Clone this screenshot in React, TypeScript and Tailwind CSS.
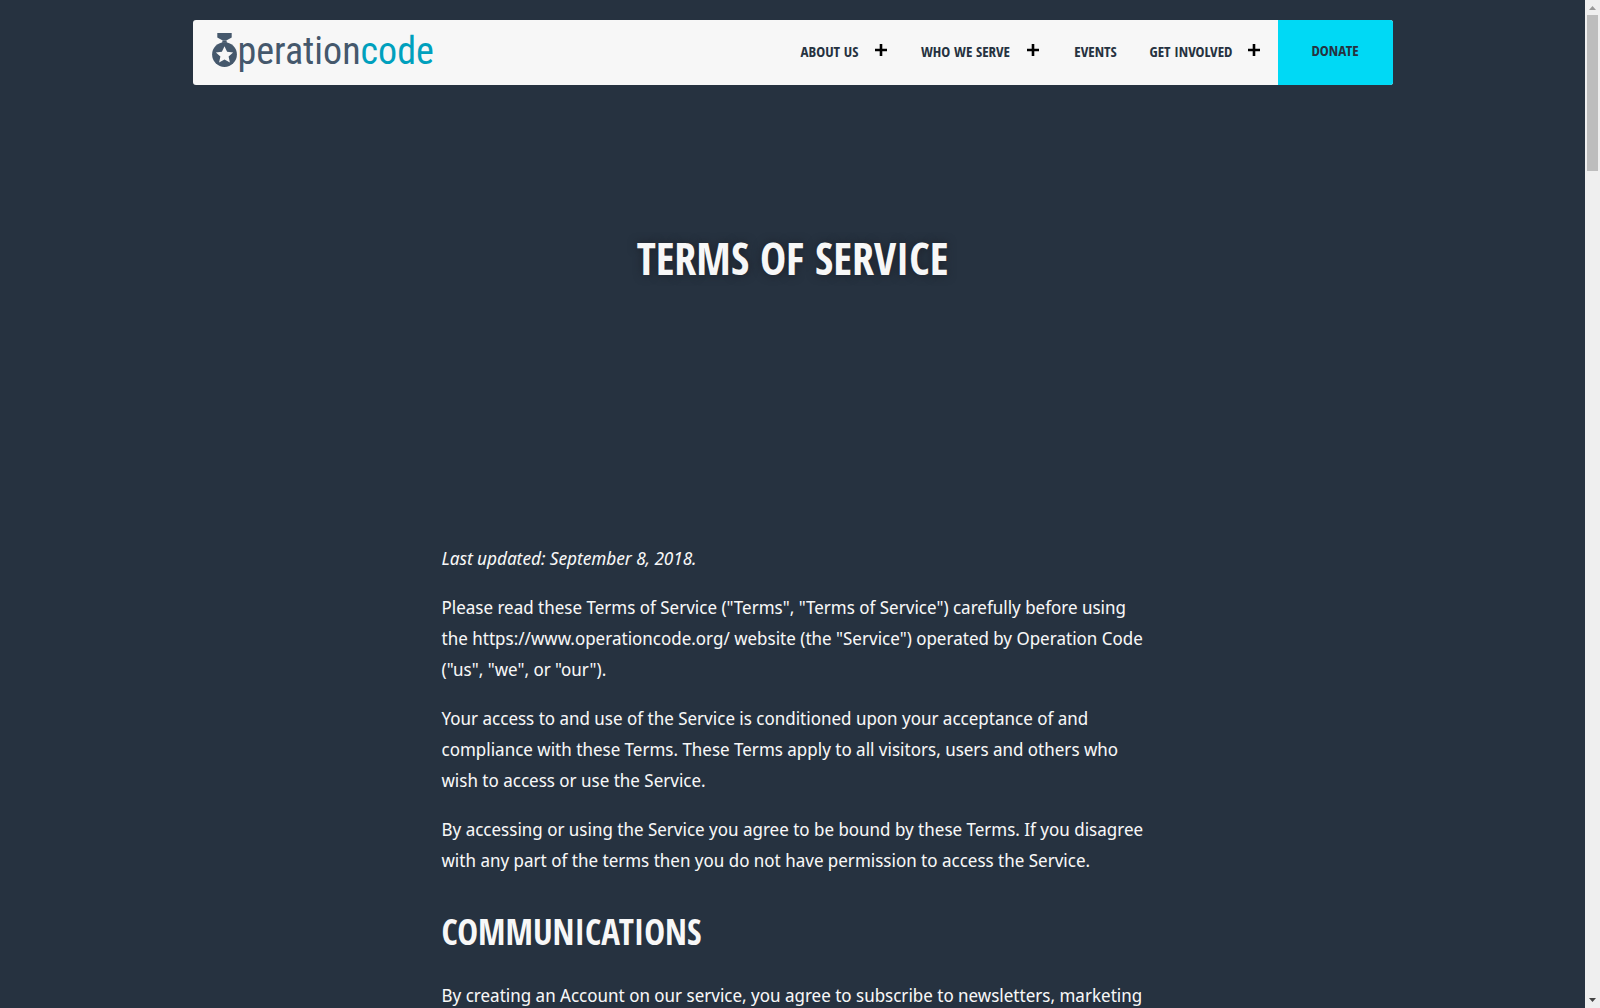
function Plus() {
  return (
    <svg viewBox="0 0 12 12" className="h-3 w-3" fill="#000" aria-hidden="true">
      <path d="M4.7 0h2.6v4.7H12v2.6H7.3V12H4.7V7.3H0V4.7h4.7z" />
    </svg>
  );
}

function Medal() {
  return (
    <svg viewBox="0 0 25 35" className="h-[35px] w-[25px]" aria-hidden="true">
      <path fill="#45586c" d="M5.3 0h14.4v4.4l-5.4 3.2h-3.6L5.3 4.4z" />
      <path fill="#45586c" d="M10.8 7.4h3.4l1 2.4H9.8z" />
      <circle cx="12.5" cy="21.6" r="12.4" fill="#45586c" />
      <path
        fill="#f7f7f7"
        d="M12.5 13.2l2.6 5.5 6 .7-4.5 4.1 1.3 6-5.4-3.1-5.4 3.1 1.3-6-4.5-4.1 6-.7z"
      />
    </svg>
  );
}

const navItems = [
  { label: 'About Us', width: 'w-[90px]', menu: true },
  { label: 'Who We Serve', width: 'w-[122px]', menu: true },
  { label: 'Events', width: 'w-[78px]', menu: false },
  { label: 'Get Involved', width: 'w-[113px]', menu: true },
];

function Header() {
  return (
    <header className="mx-auto mt-5 flex h-[65px] w-full max-w-[1200px] items-stretch overflow-hidden rounded-[3px] bg-[#f7f7f7]">
      <a href="#home" aria-label="Operation Code" className="ml-[19px] flex items-start pt-[13px]">
        <Medal />
        <span className='ml-px font-["Roboto_Condensed","Roboto",sans-serif] text-[38px] leading-[37px] text-[#45586c]'>
          peration<span className="text-[#00a0bd]">code</span>
        </span>
      </a>
      <nav className="ml-auto flex items-stretch text-[15px] font-bold text-[#263240] uppercase">
        {navItems.map((item) => (
          <div key={item.label} className="flex items-stretch">
            <a href="#nav" className={`flex items-center justify-center pb-0.5 whitespace-nowrap ${item.width}`}>
              {item.label}
            </a>
            {item.menu && (
              <button type="button" aria-label={`Open ${item.label} menu`} className="flex w-[30px] items-center pb-1.5">
                <Plus />
              </button>
            )}
          </div>
        ))}
        <a href="#donate" className="flex w-[115px] items-center justify-center bg-[#00d9f5] pb-1">
          Donate
        </a>
      </nav>
    </header>
  );
}

function Scrollbar() {
  return (
    <div className="flex w-[15px] shrink-0 flex-col items-center justify-between bg-[#efefef]" aria-hidden="true">
      <div className="flex w-full flex-col items-center">
        <svg viewBox="0 0 7 4" className="mt-[6px] mb-[5px] h-1 w-[7px]" fill="#999">
          <path d="M3.5 0L7 4H0z" />
        </svg>
        <div className="h-[156px] w-[11px] bg-[#bdbdbd]" />
      </div>
      <svg viewBox="0 0 7 4" className="mb-[6px] h-1 w-[7px]" fill="#444">
        <path d="M0 0h7L3.5 4z" />
      </svg>
    </div>
  );
}

export default function App() {
  return (
    <div className='flex h-screen overflow-hidden bg-[#263240] font-["Open_Sans_Condensed","Roboto_Condensed",sans-serif] text-[#f7f7f7]'>
      <div className="min-w-0 flex-1 overflow-hidden">
        <Header />
        <h1 className="mt-[148px] text-center text-[44px] leading-[50px] font-bold uppercase [text-shadow:0_0_10px_#1d2028]">
          Terms of Service
        </h1>
        <main className='mx-auto mt-[260px] flex w-full max-w-[702px] flex-col gap-[18px] font-["Noto_Sans_Display","Noto_Sans",sans-serif] text-lg leading-[31px]'>
          <p className="italic">Last updated: September 8, 2018.</p>
          <p>
            Please read these Terms of Service ("Terms", "Terms of Service") carefully before using the
            https://www.operationcode.org/ website (the "Service") operated by Operation Code ("us", "we", or "our").
          </p>
          <p>
            Your access to and use of the Service is conditioned upon your acceptance of and compliance with these
            Terms. These Terms apply to all visitors, users and others who wish to access or use the Service.
          </p>
          <p>
            By accessing or using the Service you agree to be bound by these Terms. If you disagree with any part of the
            terms then you do not have permission to access the Service.
          </p>
          <h2 className='mt-2 font-["Open_Sans_Condensed","Roboto_Condensed",sans-serif] text-[35px] leading-[60px] font-bold uppercase'>
            Communications
          </h2>
          <p>By creating an Account on our service, you agree to subscribe to newsletters, marketing</p>
        </main>
      </div>
      <Scrollbar />
    </div>
  );
}
